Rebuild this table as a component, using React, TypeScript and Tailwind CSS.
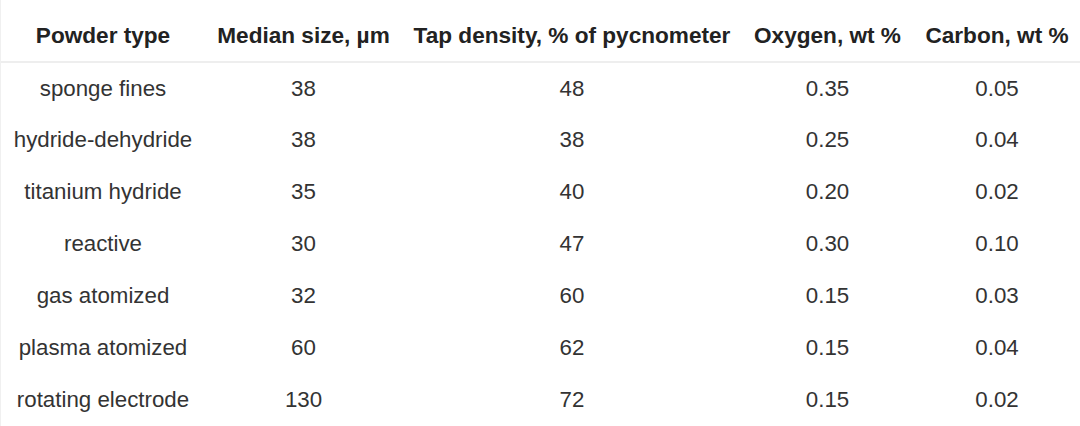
const rows = [
  ["sponge fines", "38", "48", "0.35", "0.05"],
  ["hydride-dehydride", "38", "38", "0.25", "0.04"],
  ["titanium hydride", "35", "40", "0.20", "0.02"],
  ["reactive", "30", "47", "0.30", "0.10"],
  ["gas atomized", "32", "60", "0.15", "0.03"],
  ["plasma atomized", "60", "62", "0.15", "0.04"],
  ["rotating electrode", "130", "72", "0.15", "0.02"],
];

const headers = [
  "Powder type",
  "Median size, µm",
  "Tap density, % of pycnometer",
  "Oxygen, wt %",
  "Carbon, wt %",
];

export default function App() {
  return (
    <div className="w-[1080px] h-[426px] overflow-hidden bg-white border-l border-[#f0f0f0] font-['Liberation_Sans',Arial,sans-serif]">
      <table className="w-[1080px] table-fixed border-collapse text-[22.3px] text-[#333]">
        <colgroup>
          <col className="w-[204px]" />
          <col className="w-[197px]" />
          <col className="w-[340px]" />
          <col className="w-[171px]" />
          <col className="w-[168px]" />
        </colgroup>
        <thead>
          <tr className="border-b-2 border-[#eeeeee]">
            {headers.map((h) => (
              <th key={h} className="h-[62px] pt-[10px] pb-0 px-0 text-center align-middle text-[22.6px] font-bold text-[#222] whitespace-nowrap">
                {h}
              </th>
            ))}
          </tr>
        </thead>
        <tbody>
          {rows.map((r) => (
            <tr key={r[0]} className="h-[52px]">
              {r.map((c, i) => (
                <td key={i} className="p-0 text-center align-middle whitespace-nowrap">
                  {c}
                </td>
              ))}
            </tr>
          ))}
        </tbody>
      </table>
    </div>
  );
}
